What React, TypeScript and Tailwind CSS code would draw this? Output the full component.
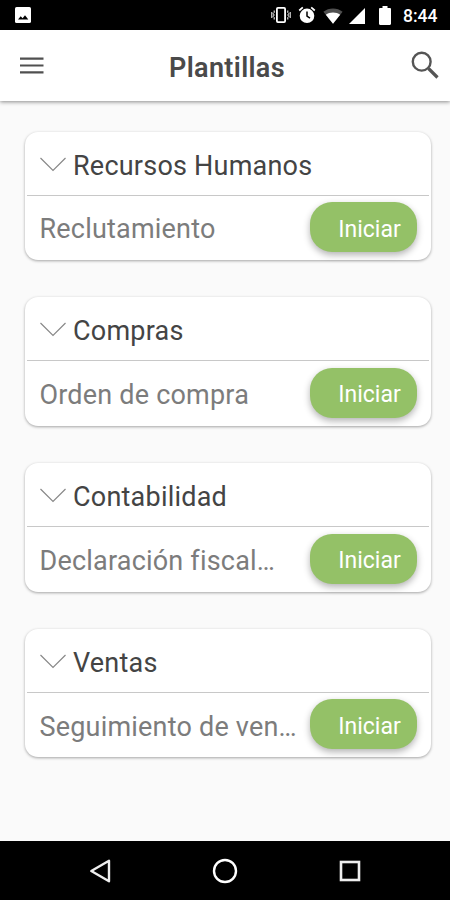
interface Template {
  id: string;
  category: string;
  name: string;
}

const templates: Template[] = [
  { id: "hr", category: "Recursos Humanos", name: "Reclutamiento" },
  { id: "purchases", category: "Compras", name: "Orden de compra" },
  { id: "accounting", category: "Contabilidad", name: "Declaración fiscal…" },
  { id: "sales", category: "Ventas", name: "Seguimiento de ven…" },
];

function StatusBar() {
  return (
    <div className="h-[30px] shrink-0 bg-black flex items-center justify-between pl-[15px] pr-[12px]">
      <svg width="16" height="16" viewBox="0 0 16 16">
        <rect width="16" height="16" rx="1.6" fill="#fff" />
        <path d="M3 12.5 5.7 9.3 7.6 11.2 10 8.3 13.3 12.5z" fill="#000" />
      </svg>
      <div className="flex items-center">
        {/* vibrate */}
        <svg width="20" height="18" viewBox="0 0 20 18" fill="none" stroke="#fff">
          <rect x="5.9" y="1.9" width="8.2" height="14.2" rx="1" strokeWidth="1.8" />
          <path d="M3.2 4.5v2l-1 1 1 1.5-1 1.5 1 1v2M.8 6v6M16.8 4.5v2l1 1-1 1.5 1 1.5-1 1v2M19.2 6v6" strokeWidth="1" />
        </svg>
        {/* alarm */}
        <svg className="ml-[7px]" width="18" height="18" viewBox="0 0 18 18" fill="none">
          <circle cx="9" cy="9.8" r="7.3" fill="#fff" />
          <path d="M1.2 4.5 4.8 1.4M16.8 4.5 13.2 1.4" stroke="#fff" strokeWidth="1.7" />
          <path d="M9 5.5v4.7l3 1.9" stroke="#000" strokeWidth="1.5" />
        </svg>
        {/* wifi */}
        <svg className="ml-[7px] relative top-px" width="20" height="16" viewBox="0 0 20 16">
          <path d="M10 15.8.4 3.8C3 1.7 6.5.5 10 .5s7 1.2 9.6 3.3z" fill="#505050" />
          <path d="M10 15.8 2.8 6.8C4.8 5.3 7.3 4.6 10 4.6s5.2.7 7.2 2.2z" fill="#fff" />
        </svg>
        {/* signal */}
        <svg className="ml-[6px] relative top-px" width="16" height="16" viewBox="0 0 16 16">
          <path d="M0 16 16 0v16z" fill="#fff" />
        </svg>
        {/* battery */}
        <svg className="ml-[14px]" width="12" height="19" viewBox="0 0 12 19">
          <path d="M3.5 0h5v2h2.3c.7 0 1.2.5 1.2 1.2v14.6c0 .7-.5 1.2-1.2 1.2H1.2C.5 19 0 18.500 0 17.800V3.200C0 2.500.5 2 1.200 2h2.300z" fill="#fff" />
        </svg>
        <span className="ml-[12px] w-[35px] text-[17.5px] leading-[20px] font-medium text-white whitespace-nowrap relative top-px">8:44</span>
      </div>
    </div>
  );
}

function Header() {
  return (
    <header className="relative z-10 h-[70.5px] shrink-0 bg-white flex items-center justify-between pl-[20px] pr-[11px] shadow-[0_1px_4px_rgba(0,0,0,0.45)]">
      <button aria-label="Menú">
        <svg width="24" height="18" viewBox="0 0 24 18" stroke="#505050" strokeWidth="2.2">
          <path d="M0 2.7h23.5M0 9.5h23.5M0 16.3h23.5" />
        </svg>
      </button>
      <h1 className="text-[27px] leading-[32px] tracking-[0.35px] font-semibold text-[#4a4a4a] relative left-[-0.5px] top-[2.5px]">Plantillas</h1>
      <button aria-label="Buscar">
        <svg width="28" height="28" viewBox="0 0 28 28" fill="none" stroke="#555">
          <circle cx="10.7" cy="10.7" r="8.9" strokeWidth="2.4" />
          <path d="m17.5 17.5 9 9" strokeWidth="3.2" />
        </svg>
      </button>
    </header>
  );
}

function TemplateCard({ template }: { template: Template }) {
  return (
    <section className="h-[128.7px] shrink-0 flex flex-col rounded-[13px] bg-white px-[2px] shadow-[0_1px_3px_rgba(0,0,0,0.35)]">
      <div className="h-[63px] shrink-0 flex items-center pl-[13px]">
        <svg className="shrink-0 relative top-px" width="26" height="15" viewBox="0 0 26 15" fill="none" stroke="#888" strokeWidth="1.2">
          <path d="m.5 1 12.5 12.5L25.5 1" />
        </svg>
        <h2 className="ml-[7px] text-[27px] leading-[32px] tracking-[0.22px] text-[#444] relative top-[2.6px]">{template.category}</h2>
      </div>
      <div className="flex-1 flex items-center justify-between border-t-[1.5px] border-[#c8c8c8] pl-[12.5px] pr-[12px]">
        <span className="text-[27px] leading-[32px] tracking-[0.2px] text-[#7c7c7c] whitespace-nowrap relative top-[1.6px]">{template.name}</span>
        <button className="w-[107px] h-[50px] shrink-0 rounded-[22px] bg-[#94c167] pl-[12px] text-[23px] leading-[30px] text-white shadow-[0_3px_7px_rgba(0,0,0,0.3)] relative top-[-0.7px]">
          <span className="relative top-[2.6px]">Iniciar</span>
        </button>
      </div>
    </section>
  );
}

function NavigationBar() {
  return (
    <nav className="h-[59.5px] shrink-0 bg-black flex items-center justify-between pt-px pl-[89px] pr-[89px]">
      <svg width="22" height="26" viewBox="0 0 22 26" fill="none" stroke="#eee" strokeWidth="2.4">
        <path d="M2.3 13 20 2.8v20.4z" strokeLinejoin="round" />
      </svg>
      <svg width="26" height="26" viewBox="0 0 26 26" fill="none" stroke="#fff" strokeWidth="2.4">
        <circle cx="13" cy="13" r="11" />
      </svg>
      <svg width="22" height="22" viewBox="0 0 22 22" fill="none" stroke="#eee" strokeWidth="2.6">
        <rect x="2" y="2" width="18" height="18" />
      </svg>
    </nav>
  );
}

export default function App() {
  return (
    <div className="w-[450px] h-[900px] flex flex-col bg-[#fafafa] font-[Roboto,sans-serif] overflow-hidden">
      <StatusBar />
      <Header />
      <main className="flex-1 min-h-0 flex flex-col gap-[37px] pt-[31px] pl-[25px] pr-[19px]">
        {templates.map((template) => (
          <TemplateCard key={template.id} template={template} />
        ))}
      </main>
      <NavigationBar />
    </div>
  );
}
